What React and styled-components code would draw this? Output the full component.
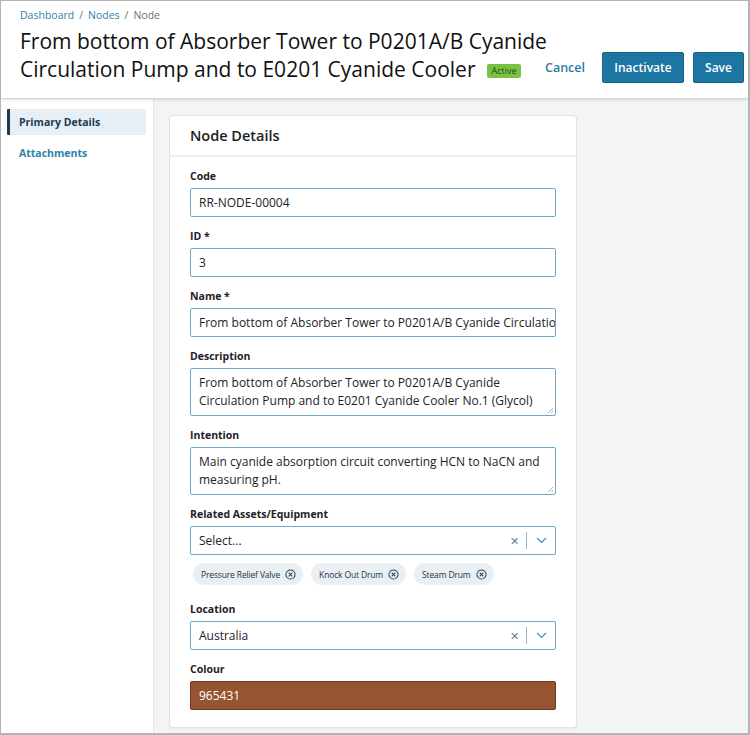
import React from 'react';
import styled, { createGlobalStyle } from 'styled-components';

const Global = createGlobalStyle`
  * { box-sizing: border-box; }
  body {
    margin: 0;
    font-family: "Open Sans", "Noto Sans", sans-serif;
    color: #1f2328;
    background: #fff;
  }
`;

const Frame = styled.div`
  width: 750px;
  height: 735px;
  border: 1px solid #b4b4b4;
  border-right-width: 2px;
  border-bottom-width: 2px;
  display: flex;
  flex-direction: column;
  overflow: hidden;
`;

const Header = styled.header`
  display: flex;
  align-items: flex-end;
  justify-content: space-between;
  padding: 7px 4px 15px 19px;
  height: 98px;
  border-bottom: 1px solid #d6d6d6;
  box-shadow: 0 1px 3px rgba(0, 0, 0, 0.12);
  position: relative;
  z-index: 1;
  background: #fff;
`;

const HeadLeft = styled.div`
  align-self: stretch;
  flex: none;
  width: 522px;
  display: flex;
  flex-direction: column;
`;

const Crumbs = styled.div`
  font-size: 10.5px;
  color: #6b6f73;
  display: flex;
  gap: 5px;
`;

const Crumb = styled.span`
  color: ${p => (p.link ? '#2f82a8' : '#6b6f73')};
`;

const Title = styled.h1`
  margin: 5px 0 0;
  font-size: 21px;
  font-weight: 400;
  line-height: 28px;
  width: 540px;
  color: #111;
`;

const Badge = styled.span`
  display: inline-block;
  margin-left: 12px;
  vertical-align: 3px;
  background: #7cc242;
  color: #1f4a12;
  font-size: 9px;
  line-height: 14px;
  padding: 0 4px;
  border-radius: 2px;
`;

const Actions = styled.div`
  display: flex;
  align-items: center;
  gap: 9px;
`;

const LinkButton = styled.button`
  background: none;
  border: 0;
  color: #2a7da6;
  font: 600 12.5px "Open Sans", sans-serif;
  margin-right: 8px;
  padding: 0;
`;

const Button = styled.button`
  background: #1d76a2;
  border: 1px solid #176489;
  border-radius: 2px;
  color: #fff;
  font: 600 12px "Open Sans", sans-serif;
  height: 31px;
  padding: 0 10px;
  min-width: ${p => (p.wide ? 82 : 51)}px;
`;

const Body = styled.div`
  flex: 1;
  display: flex;
  min-height: 0;
`;

const Side = styled.nav`
  width: 153px;
  background: #fff;
  border-right: 1px solid #e2e4e7;
  padding: 10px 7px 0 6px;
  display: flex;
  flex-direction: column;
  gap: 5px;
`;

const NavItem = styled.div`
  font-size: 10.5px;
  font-weight: 700;
  height: 26px;
  display: flex;
  align-items: center;
  padding-left: 9px;
  color: ${p => (p.active ? '#203b52' : '#2f82a8')};
  background: ${p => (p.active ? '#e7eff6' : 'transparent')};
  border-left: 3px solid ${p => (p.active ? '#1e3850' : 'transparent')};
  border-radius: 1px;
`;

const Main = styled.main`
  flex: 1;
  background: #f3f4f6;
  padding: 16px 0 0 15px;
`;

const Card = styled.section`
  width: 408px;
  background: #fff;
  border: 1px solid #e1e3e6;
  border-radius: 4px;
  box-shadow: 0 1px 2px rgba(0, 0, 0, 0.05);
`;

const CardHead = styled.div`
  height: 41px;
  display: flex;
  align-items: center;
  padding: 0 20px;
  border-bottom: 2px solid #eceef0;
  font-size: 14.5px;
  font-weight: 600;
  color: #1b1f23;
`;

const CardBody = styled.div`
  padding: 12px 20px 17px;
  display: flex;
  flex-direction: column;
`;

const Field = styled.div`
  display: flex;
  flex-direction: column;
  margin-bottom: ${p => p.mb ?? 12}px;
`;

const Label = styled.label`
  font-size: 10.5px;
  font-weight: 700;
  line-height: 15px;
  margin-bottom: 4px;
  color: #1e2226;
`;

const Input = styled.div`
  height: 29px;
  border: 1px solid ${p => (p.bg ? '#6a3a22' : '#6fa9c6')};
  border-radius: 2px;
  background: ${p => p.bg || '#fff'};
  color: ${p => (p.bg ? '#fff' : '#1e2226')};
  font-size: 12px;
  display: flex;
  align-items: center;
  padding: 0 8px;
  white-space: nowrap;
  overflow: hidden;
`;

const Area = styled.div`
  height: 48px;
  border: 1px solid #6fa9c6;
  border-radius: 2px;
  font-size: 12px;
  line-height: 18px;
  padding: 5px 8px;
  position: relative;
  color: #1e2226;
`;

const Grip = styled.svg`
  position: absolute;
  right: 1px;
  bottom: 1px;
`;

const SelectBox = styled(Input)`
  padding-right: 0;
`;

const SelectText = styled.span`
  flex: 1;
`;

const Clear = styled.span`
  font-size: 11px;
  color: #6b7a86;
  width: 24px;
  text-align: center;
`;

const Sep = styled.span`
  width: 1px;
  height: 17px;
  background: #8cbad2;
`;

const Caret = styled.span`
  width: 28px;
  display: flex;
  justify-content: center;
`;

const Chips = styled.div`
  display: flex;
  gap: 8px;
  padding: 8px 3px 0;
`;

const Chip = styled.span`
  display: inline-flex;
  align-items: center;
  gap: 5px;
  height: 22px;
  padding: 0 7px 0 8px;
  background: #e8f0f5;
  border-radius: 11px;
  font-size: 8.5px;
  letter-spacing: -0.15px;
  color: #2c3034;
`;

function ResizeGrip() {
  return (
    <Grip width="7" height="7" viewBox="0 0 7 7">
      <path d="M6 1L1 6M6 4L4 6" stroke="#9aa3aa" strokeWidth="0.8" />
    </Grip>
  );
}

function Select({ value }) {
  return (
    <SelectBox>
      <SelectText>{value}</SelectText>
      <Clear>✕</Clear>
      <Sep />
      <Caret>
        <svg width="11" height="7" viewBox="0 0 11 7">
          <path d="M1 1l4.5 4.5L10 1" fill="none" stroke="#4a8fb3" strokeWidth="1.2" />
        </svg>
      </Caret>
    </SelectBox>
  );
}

function ChipX() {
  return (
    <svg width="11" height="11" viewBox="0 0 12 12">
      <circle cx="6" cy="6" r="5" fill="none" stroke="#2f3d48" strokeWidth="1.1" />
      <path d="M4 4l4 4M8 4l-4 4" stroke="#2f3d48" strokeWidth="1.1" />
    </svg>
  );
}

export default function App() {
  return (
    <>
      <Global />
      <Frame>
        <Header>
          <HeadLeft>
            <Crumbs>
              <Crumb link>Dashboard</Crumb>/<Crumb link>Nodes</Crumb>/<Crumb>Node</Crumb>
            </Crumbs>
            <Title>
              From bottom of Absorber Tower to P0201A/B Cyanide Circulation Pump and to E0201 Cyanide Cooler
              <Badge>Active</Badge>
            </Title>
          </HeadLeft>
          <Actions>
            <LinkButton>Cancel</LinkButton>
            <Button wide>Inactivate</Button>
            <Button>Save</Button>
          </Actions>
        </Header>
        <Body>
          <Side>
            <NavItem active>Primary Details</NavItem>
            <NavItem>Attachments</NavItem>
          </Side>
          <Main>
            <Card>
              <CardHead>Node Details</CardHead>
              <CardBody>
                <Field>
                  <Label>Code</Label>
                  <Input>RR-NODE-00004</Input>
                </Field>
                <Field>
                  <Label>ID *</Label>
                  <Input>3</Input>
                </Field>
                <Field>
                  <Label>Name *</Label>
                  <Input>From bottom of Absorber Tower to P0201A/B Cyanide Circulation Pump</Input>
                </Field>
                <Field>
                  <Label>Description</Label>
                  <Area>
                    From bottom of Absorber Tower to P0201A/B Cyanide Circulation Pump and to E0201 Cyanide Cooler No.1 (Glycol)
                    <ResizeGrip />
                  </Area>
                </Field>
                <Field>
                  <Label>Intention</Label>
                  <Area>
                    Main cyanide absorption circuit converting HCN to NaCN and measuring pH.
                    <ResizeGrip />
                  </Area>
                </Field>
                <Field mb={17}>
                  <Label>Related Assets/Equipment</Label>
                  <Select value="Select..." />
                  <Chips>
                    <Chip>Pressure Relief Valve <ChipX /></Chip>
                    <Chip>Knock Out Drum <ChipX /></Chip>
                    <Chip>Steam Drum <ChipX /></Chip>
                  </Chips>
                </Field>
                <Field>
                  <Label>Location</Label>
                  <Select value="Australia" />
                </Field>
                <Field mb={0}>
                  <Label>Colour</Label>
                  <Input bg="#965431">965431</Input>
                </Field>
              </CardBody>
            </Card>
          </Main>
        </Body>
      </Frame>
    </>
  );
}
